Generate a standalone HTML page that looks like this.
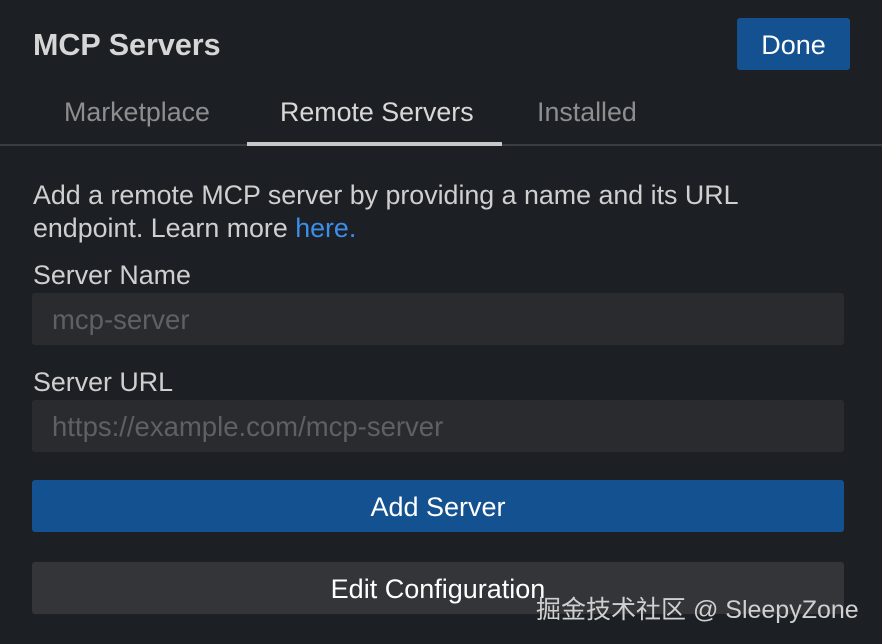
<!DOCTYPE html>
<html><head><meta charset="utf-8"><style>
body{margin:0;width:882px;height:644px;background:#1c1f23;font-family:"Liberation Sans",sans-serif;position:relative;overflow:hidden;color:#d4d4d4}
.a{position:absolute;white-space:nowrap}
.title{left:33px;top:27px;font-size:30.5px;font-weight:bold;color:#d6d6d6;line-height:36px}
.done{left:737px;top:18px;width:113px;height:52px;background:#145190;border-radius:3px;color:#fff;font-size:27px;text-align:center;line-height:54px}
.tab{top:96px;font-size:26.8px;color:#8c8e90;line-height:32px}
.div{left:0;top:144px;width:882px;height:2px;background:#3a3c3f}
.ul{left:247px;top:142px;width:255px;height:4px;background:#c8c8c8}
.t{font-size:26.8px;color:#cfcfcf;line-height:32px}
.inp{left:32px;width:812px;height:52px;background:#2a2b2e;border-radius:3px;font-size:27.5px;color:#5f6063;line-height:54px;text-indent:20px}
.btn{left:32px;width:812px;height:52px;border-radius:3px;font-size:27px;color:#fff;text-align:center;line-height:54px}
</style></head><body>
<div class="a title">MCP Servers</div>
<div class="a done">Done</div>
<div class="a tab" style="left:64px">Marketplace</div>
<div class="a tab" style="left:280px;color:#d8d8d8">Remote Servers</div>
<div class="a tab" style="left:537px">Installed</div>
<div class="a div"></div><div class="a ul"></div>
<div class="a t" style="left:33px;top:179px">Add a remote MCP server by providing a name and its URL</div>
<div class="a t" style="left:33px;top:212px">endpoint. Learn more <span style="color:#3b8eea">here.</span></div>
<div class="a t" style="left:33px;top:259px">Server Name</div>
<div class="a inp" style="top:293px">mcp-server</div>
<div class="a t" style="left:33px;top:366px">Server URL</div>
<div class="a inp" style="top:400px">https://example.com/mcp-server</div>
<div class="a btn" style="top:480px;background:#145190">Add Server</div>
<div class="a btn" style="top:562px;background:#333538">Edit Configuration</div>
<div class="a" style="left:536px;top:594px;font-size:25px;line-height:32px;color:#d0d0d0;font-family:'Liberation Sans','Noto Sans CJK SC',sans-serif">掘金技术社区 @ SleepyZone</div>
</body></html>
